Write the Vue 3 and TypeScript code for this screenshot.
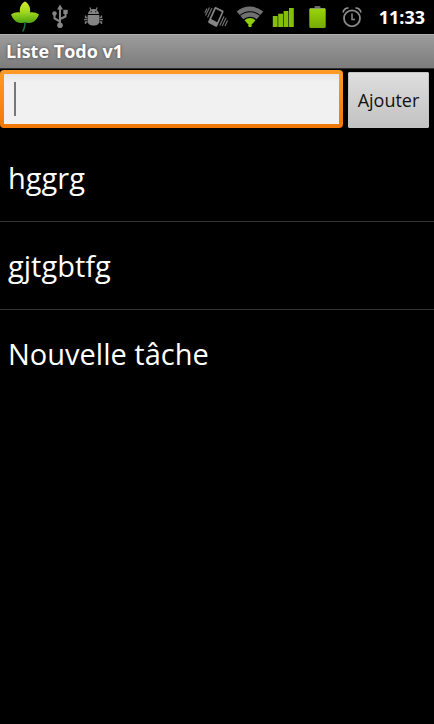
<script setup lang="ts">
import { ref } from 'vue'

interface Task {
  id: number
  label: string
}

const draft = ref('')
const tasks = ref<Task[]>([
  { id: 1, label: 'hggrg' },
  { id: 2, label: 'gjtgbtfg' },
  { id: 3, label: 'Nouvelle tâche' },
])

function addTask(): void {
  const label = draft.value.trim()
  if (!label) return
  tasks.value.push({ id: tasks.value.length + 1, label })
  draft.value = ''
}
</script>

<template>
  <div class="screen">
    <header class="status">
      <div class="icons">
        <svg class="leaf" viewBox="0 0 30 34" aria-hidden="true">
          <defs>
            <linearGradient id="leafFill" x1="0" y1="0" x2="0" y2="1">
              <stop offset="0" stop-color="#d8ea30" />
              <stop offset="0.5" stop-color="#a0d81c" />
              <stop offset="1" stop-color="#4ea312" />
            </linearGradient>
          </defs>
          <path d="M15 22C15 26 14.600 29 12.500 31.500" fill="none" stroke="#1c6b3c" stroke-width="1.600" />
          <path d="M15 1.500C18.500 3.500 21 7.500 20 12.500C22.500 11.800 26 12.300 29 14.500C27 19.500 24 22.800 19.500 23C17.500 23.100 16 22.800 15 22C14 22.800 12.500 23.100 10.500 23C6 22.800 3 19.500 1 14.500C4 12.300 7.500 11.800 10 12.500C9 7.500 11.500 3.500 15 1.500Z" fill="url(#leafFill)" />
        </svg>
        <svg class="usb" viewBox="0 0 20 34" aria-hidden="true">
          <g fill="none" stroke="#858585" stroke-width="2">
            <path d="M10 8V24" />
            <path d="M10 21.500L4.500 18.500V14" />
            <path d="M10 19L15.500 16.500V12" />
          </g>
          <g fill="#858585">
            <path d="M10 4.500L13 9.500H7Z" />
            <circle cx="10" cy="25.200" r="2.800" />
            <circle cx="4.500" cy="13.500" r="2.200" />
            <rect x="13.300" y="9.800" width="4.400" height="4.200" />
          </g>
        </svg>
        <svg class="droid" viewBox="0 0 26 34" aria-hidden="true">
          <g fill="none" stroke="#7c7c7c" stroke-width="1.300">
            <path d="M9.800 7.500L11 10M17.200 7.500L16 10" />
            <path d="M7.500 17.500H5.500V15.500M7.500 19.700H4M7.500 22H5.500V24M19.500 17.500H21.500V15.500M19.500 19.700H23M19.500 22H21.500V24" />
          </g>
          <path d="M8 14C8.300 11 10.500 9 13.500 9S18.700 11 19 14Z" fill="#858585" />
          <path d="M7.700 15H19.300V21.500C19.300 24 17 25.500 13.500 25.500S7.700 24 7.700 21.500Z" fill="#858585" />
          <circle cx="11.300" cy="11.800" r="0.800" fill="#222" />
          <circle cx="15.700" cy="11.800" r="0.800" fill="#222" />
        </svg>
      </div>
      <div class="icons">
        <svg class="icon" viewBox="0 0 24 34" aria-hidden="true">
          <path d="M11.800 7L19 10.500Q19.900 11 19.500 12L13.300 26Q12.800 27.200 11.800 26.700L4.700 23Q3.800 22.400 4.200 21.500L10.400 7.800Q10.900 6.600 11.800 7Z" fill="#858585" />
          <path d="M11.800 8.900L17.800 12L13.200 22.300L7.200 19.100Z" fill="#000" />
          <g fill="none" stroke="#707070" stroke-width="1.200">
            <path d="M8 8L3.600 17.500M5.500 7.500L1.500 15.500M3 8.500L0.800 13" />
            <path d="M20 16.500L15.800 25.500M22 18L18.200 26M23.500 20.500L21 26" />
          </g>
        </svg>
        <svg class="icon" viewBox="0 0 24 34" aria-hidden="true">
          <g fill="none" stroke="#707070" stroke-width="4.600">
            <path d="M0.200 13.300A18 18 0 0 1 23.800 13.300" />
            <path d="M3.800 17.600A12.500 12.500 0 0 1 20.200 17.600" />
          </g>
          <path d="M6.500 20.300A8 8 0 0 1 17.500 20.300L14 24.200H10Z" fill="#8fce08" />
          <circle cx="12" cy="25.400" r="1.800" fill="#8fce08" />
        </svg>
        <svg class="icon" viewBox="0 0 24 34" aria-hidden="true">
          <g fill="#83bf08">
            <rect x="0.800" y="16" width="4.800" height="11" />
            <rect x="6.200" y="13.700" width="4.800" height="13.300" />
            <rect x="11.600" y="11" width="4.800" height="16" />
            <rect x="17" y="8" width="4.800" height="19" />
          </g>
        </svg>
        <svg class="icon" viewBox="0 0 24 34" aria-hidden="true">
          <defs>
            <linearGradient id="cell" x1="0" y1="0" x2="0" y2="1">
              <stop offset="0" stop-color="#9bd60a" />
              <stop offset="1" stop-color="#74a907" />
            </linearGradient>
          </defs>
          <rect x="8.500" y="6" width="6" height="3" rx="1" fill="#666" />
          <rect x="3.300" y="8" width="16.400" height="20" rx="1.500" fill="url(#cell)" />
          <path d="M4 8.500H19" stroke="#8a9870" />
        </svg>
        <svg class="icon" viewBox="0 0 24 34" aria-hidden="true">
          <g fill="none" stroke="#8a8a8a">
            <circle cx="12" cy="18.300" r="8" stroke-width="1.800" />
            <path d="M12 13.500V19.500H15" stroke-width="1.500" />
            <path d="M3 12.500C3.500 10 5.800 8 8.500 7.800M21 12.500C20.500 10 18.200 8 15.500 7.800" stroke-width="1.700" />
          </g>
        </svg>
        <time class="clock">11:33</time>
      </div>
    </header>
    <h1 class="title">Liste Todo v1</h1>
    <form class="entry" @submit.prevent="addTask">
      <input v-model="draft" class="field" type="text" aria-label="Nouvelle tâche" />
      <button class="add" type="submit">Ajouter</button>
    </form>
    <ul class="tasks">
      <li v-for="task in tasks" :key="task.id" class="task">{{ task.label }}</li>
    </ul>
  </div>
</template>

<style>
body {
  margin: 0;
  background: #000;
}
</style>

<style scoped>
.screen {
  min-height: 100vh;
  background: #000;
  color: #fff;
  font-family: "Open Sans", "Noto Sans", sans-serif;
}

.status {
  display: flex;
  justify-content: space-between;
  height: 34px;
  padding: 0 9px 0 10px;
}

.icons {
  display: flex;
  align-items: center;
  gap: 10px;
}

.icons svg {
  display: block;
  height: 34px;
  overflow: visible;
}

.leaf {
  width: 30px;
}

.usb {
  width: 20px;
}

.droid {
  width: 26px;
}

.icon {
  width: 24px;
}

.clock {
  margin-left: 5px;
  font-size: 18px;
  font-weight: 700;
  line-height: 34px;
}

.title {
  box-sizing: border-box;
  height: 35px;
  margin: 0;
  padding: 0 6px;
  border-top: 1px solid #b0b0b0;
  border-bottom: 1px solid #303030;
  background: linear-gradient(#9c9c9c, #7c7c7c);
  font-size: 18px;
  font-weight: 700;
  line-height: 32px;
  text-shadow: 0 0 3px #444;
}

.entry {
  display: flex;
  align-items: flex-end;
  gap: 5px;
  padding: 1px 5px 6px 0;
}

.field {
  box-sizing: border-box;
  flex: 1;
  min-width: 0;
  height: 58px;
  padding: 0 14px;
  border: 4px solid transparent;
  border-radius: 4px;
  outline: none;
  /* resting caret, paper fill, then the orange focus frame */
  background:
    linear-gradient(#777, #777) 10px 8px / 2px 34px no-repeat padding-box,
    linear-gradient(#e4e4e4, #f1f1f1 8px, #f1f1f1) padding-box,
    linear-gradient(#ff9c26, #f07808) border-box;
  color: #000;
  font: inherit;
  font-size: 20px;
}

.add {
  box-sizing: border-box;
  width: 81px;
  height: 56px;
  padding: 0;
  border: 1px solid #c4c4c4;
  border-radius: 1px;
  background: linear-gradient(#dedede, #c2c2c2);
  color: #111;
  font: inherit;
  font-size: 18px;
}

.tasks {
  margin: 0;
  padding: 0;
  list-style: none;
}

.task {
  padding: 0 8px;
  font-size: 29px;
  line-height: 87px;
}

.task + .task {
  border-top: 1px solid #333;
}
</style>
